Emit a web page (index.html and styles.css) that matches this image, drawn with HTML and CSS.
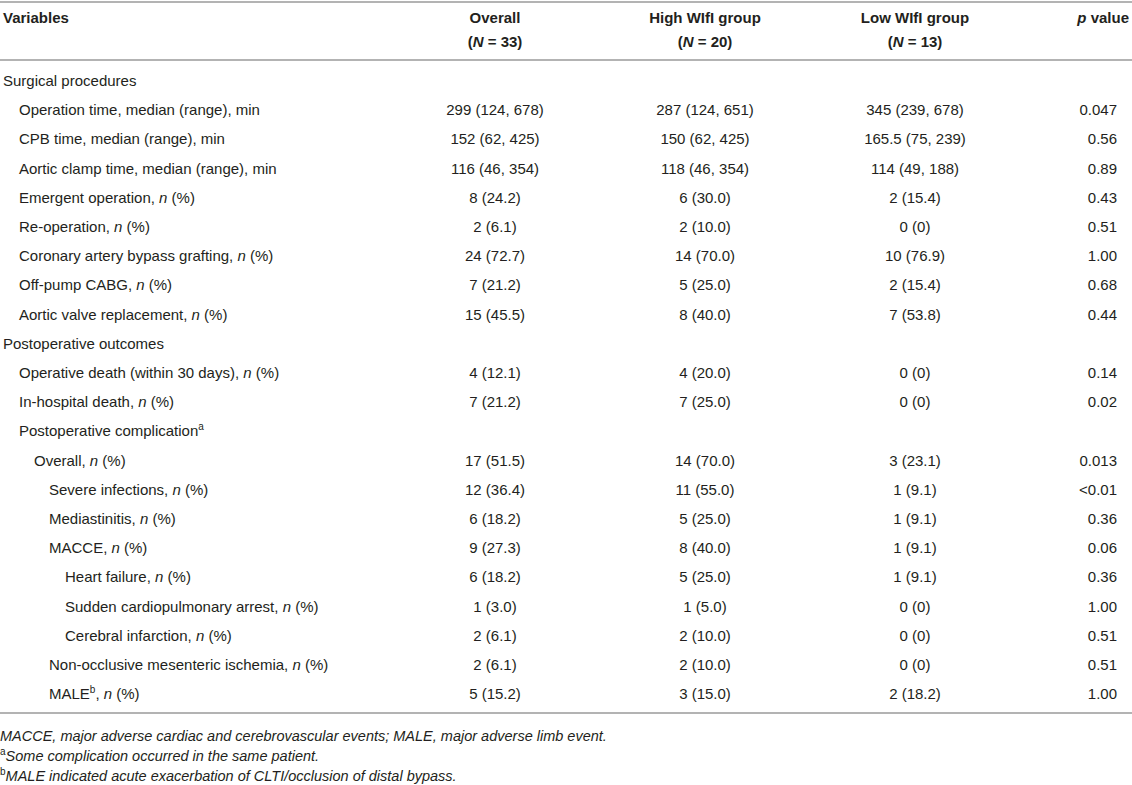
FILE: index.html
```html
<!DOCTYPE html>
<html lang="en">
<head>
  <meta charset="UTF-8">
  <meta name="viewport" content="width=device-width, initial-scale=1.0">
  <title>Surgical procedures and postoperative outcomes</title>
  <link rel="stylesheet" href="styles.css">
</head>
<body>
  <table class="data-table">
    <colgroup>
      <col class="col-var">
      <col class="col-num">
      <col class="col-num">
      <col class="col-num">
      <col class="col-p">
    </colgroup>
    <thead>
      <tr>
        <th class="var">Variables</th>
        <th>Overall<br>(<i>N</i> = 33)</th>
        <th>High WIfI group<br>(<i>N</i> = 20)</th>
        <th>Low WIfI group<br>(<i>N</i> = 13)</th>
        <th class="p"><i>p</i> value</th>
      </tr>
    </thead>
    <tbody>
      <tr><td class="var lv0">Surgical procedures</td><td></td><td></td><td></td><td></td></tr>
      <tr><td class="var lv1">Operation time, median (range), min</td><td>299 (124, 678)</td><td>287 (124, 651)</td><td>345 (239, 678)</td><td class="p">0.047</td></tr>
      <tr><td class="var lv1">CPB time, median (range), min</td><td>152 (62, 425)</td><td>150 (62, 425)</td><td>165.5 (75, 239)</td><td class="p">0.56</td></tr>
      <tr><td class="var lv1">Aortic clamp time, median (range), min</td><td>116 (46, 354)</td><td>118 (46, 354)</td><td>114 (49, 188)</td><td class="p">0.89</td></tr>
      <tr><td class="var lv1">Emergent operation, <i>n</i> (%)</td><td>8 (24.2)</td><td>6 (30.0)</td><td>2 (15.4)</td><td class="p">0.43</td></tr>
      <tr><td class="var lv1">Re-operation, <i>n</i> (%)</td><td>2 (6.1)</td><td>2 (10.0)</td><td>0 (0)</td><td class="p">0.51</td></tr>
      <tr><td class="var lv1">Coronary artery bypass grafting, <i>n</i> (%)</td><td>24 (72.7)</td><td>14 (70.0)</td><td>10 (76.9)</td><td class="p">1.00</td></tr>
      <tr><td class="var lv1">Off-pump CABG, <i>n</i> (%)</td><td>7 (21.2)</td><td>5 (25.0)</td><td>2 (15.4)</td><td class="p">0.68</td></tr>
      <tr><td class="var lv1">Aortic valve replacement, <i>n</i> (%)</td><td>15 (45.5)</td><td>8 (40.0)</td><td>7 (53.8)</td><td class="p">0.44</td></tr>
      <tr><td class="var lv0">Postoperative outcomes</td><td></td><td></td><td></td><td></td></tr>
      <tr><td class="var lv1">Operative death (within 30 days), <i>n</i> (%)</td><td>4 (12.1)</td><td>4 (20.0)</td><td>0 (0)</td><td class="p">0.14</td></tr>
      <tr><td class="var lv1">In-hospital death, <i>n</i> (%)</td><td>7 (21.2)</td><td>7 (25.0)</td><td>0 (0)</td><td class="p">0.02</td></tr>
      <tr><td class="var lv1">Postoperative complication<sup>a</sup></td><td></td><td></td><td></td><td></td></tr>
      <tr><td class="var lv2">Overall, <i>n</i> (%)</td><td>17 (51.5)</td><td>14 (70.0)</td><td>3 (23.1)</td><td class="p">0.013</td></tr>
      <tr><td class="var lv3">Severe infections, <i>n</i> (%)</td><td>12 (36.4)</td><td>11 (55.0)</td><td>1 (9.1)</td><td class="p">&lt;0.01</td></tr>
      <tr><td class="var lv3">Mediastinitis, <i>n</i> (%)</td><td>6 (18.2)</td><td>5 (25.0)</td><td>1 (9.1)</td><td class="p">0.36</td></tr>
      <tr><td class="var lv3">MACCE, <i>n</i> (%)</td><td>9 (27.3)</td><td>8 (40.0)</td><td>1 (9.1)</td><td class="p">0.06</td></tr>
      <tr><td class="var lv4">Heart failure, <i>n</i> (%)</td><td>6 (18.2)</td><td>5 (25.0)</td><td>1 (9.1)</td><td class="p">0.36</td></tr>
      <tr><td class="var lv4">Sudden cardiopulmonary arrest, <i>n</i> (%)</td><td>1 (3.0)</td><td>1 (5.0)</td><td>0 (0)</td><td class="p">1.00</td></tr>
      <tr><td class="var lv4">Cerebral infarction, <i>n</i> (%)</td><td>2 (6.1)</td><td>2 (10.0)</td><td>0 (0)</td><td class="p">0.51</td></tr>
      <tr><td class="var lv3">Non-occlusive mesenteric ischemia, <i>n</i> (%)</td><td>2 (6.1)</td><td>2 (10.0)</td><td>0 (0)</td><td class="p">0.51</td></tr>
      <tr><td class="var lv3">MALE<sup>b</sup>, <i>n</i> (%)</td><td>5 (15.2)</td><td>3 (15.0)</td><td>2 (18.2)</td><td class="p">1.00</td></tr>
    </tbody>
  </table>

  <div class="notes">
    <p>MACCE, major adverse cardiac and cerebrovascular events; MALE, major adverse limb event.</p>
    <p><sup>a</sup>Some complication occurred in the same patient.</p>
    <p><sup>b</sup>MALE indicated acute exacerbation of CLTI/occlusion of distal bypass.</p>
  </div>
</body>
</html>
```

FILE: styles.css
```css
body {
  margin: 0;
  font-family: "Liberation Sans", Arial, sans-serif;
  font-size: 15px;
  color: #231f20;
  background: #fff;
}
.data-table {
  width: 1132px;
  border-collapse: collapse;
  table-layout: fixed;
  margin-top: 1px;
}
.col-var {
  width: 390px;
}
.col-num {
  width: 210px;
}
.col-p {
  width: 112px;
}
.data-table th {
  font-weight: bold;
  text-align: center;
  vertical-align: top;
  line-height: 24px;
  padding: 3px 3px 5px;
  border-top: 2px solid #b3b3b3;
  border-bottom: 2px solid #b3b3b3;
}
.data-table td {
  text-align: center;
  line-height: 17.2px;
  padding: 6px 3px;
  white-space: nowrap;
}
.data-table tbody tr:first-child td {
  padding-top: 11px;
}
.data-table tbody tr:last-child td {
  padding-bottom: 10px;
  border-bottom: 2px solid #b3b3b3;
}
.data-table .var {
  text-align: left;
}
.data-table th.p {
  text-align: right;
  padding-right: 3px;
}
.data-table td.p {
  text-align: right;
  padding-right: 15px;
}
.lv0 { padding-left: 3px !important; }
.lv1 { padding-left: 19px !important; }
.lv2 { padding-left: 34px !important; }
.lv3 { padding-left: 49px !important; }
.lv4 { padding-left: 65px !important; }
sup {
  font-size: 10px;
  line-height: 0;
  vertical-align: 6px;
}
.notes {
  margin-top: 12px;
  font-size: 14.5px;
  font-style: italic;
}
.notes p {
  margin: 0;
  line-height: 20px;
}
.notes sup {
  font-style: normal;
  font-size: 10px;
}
```
